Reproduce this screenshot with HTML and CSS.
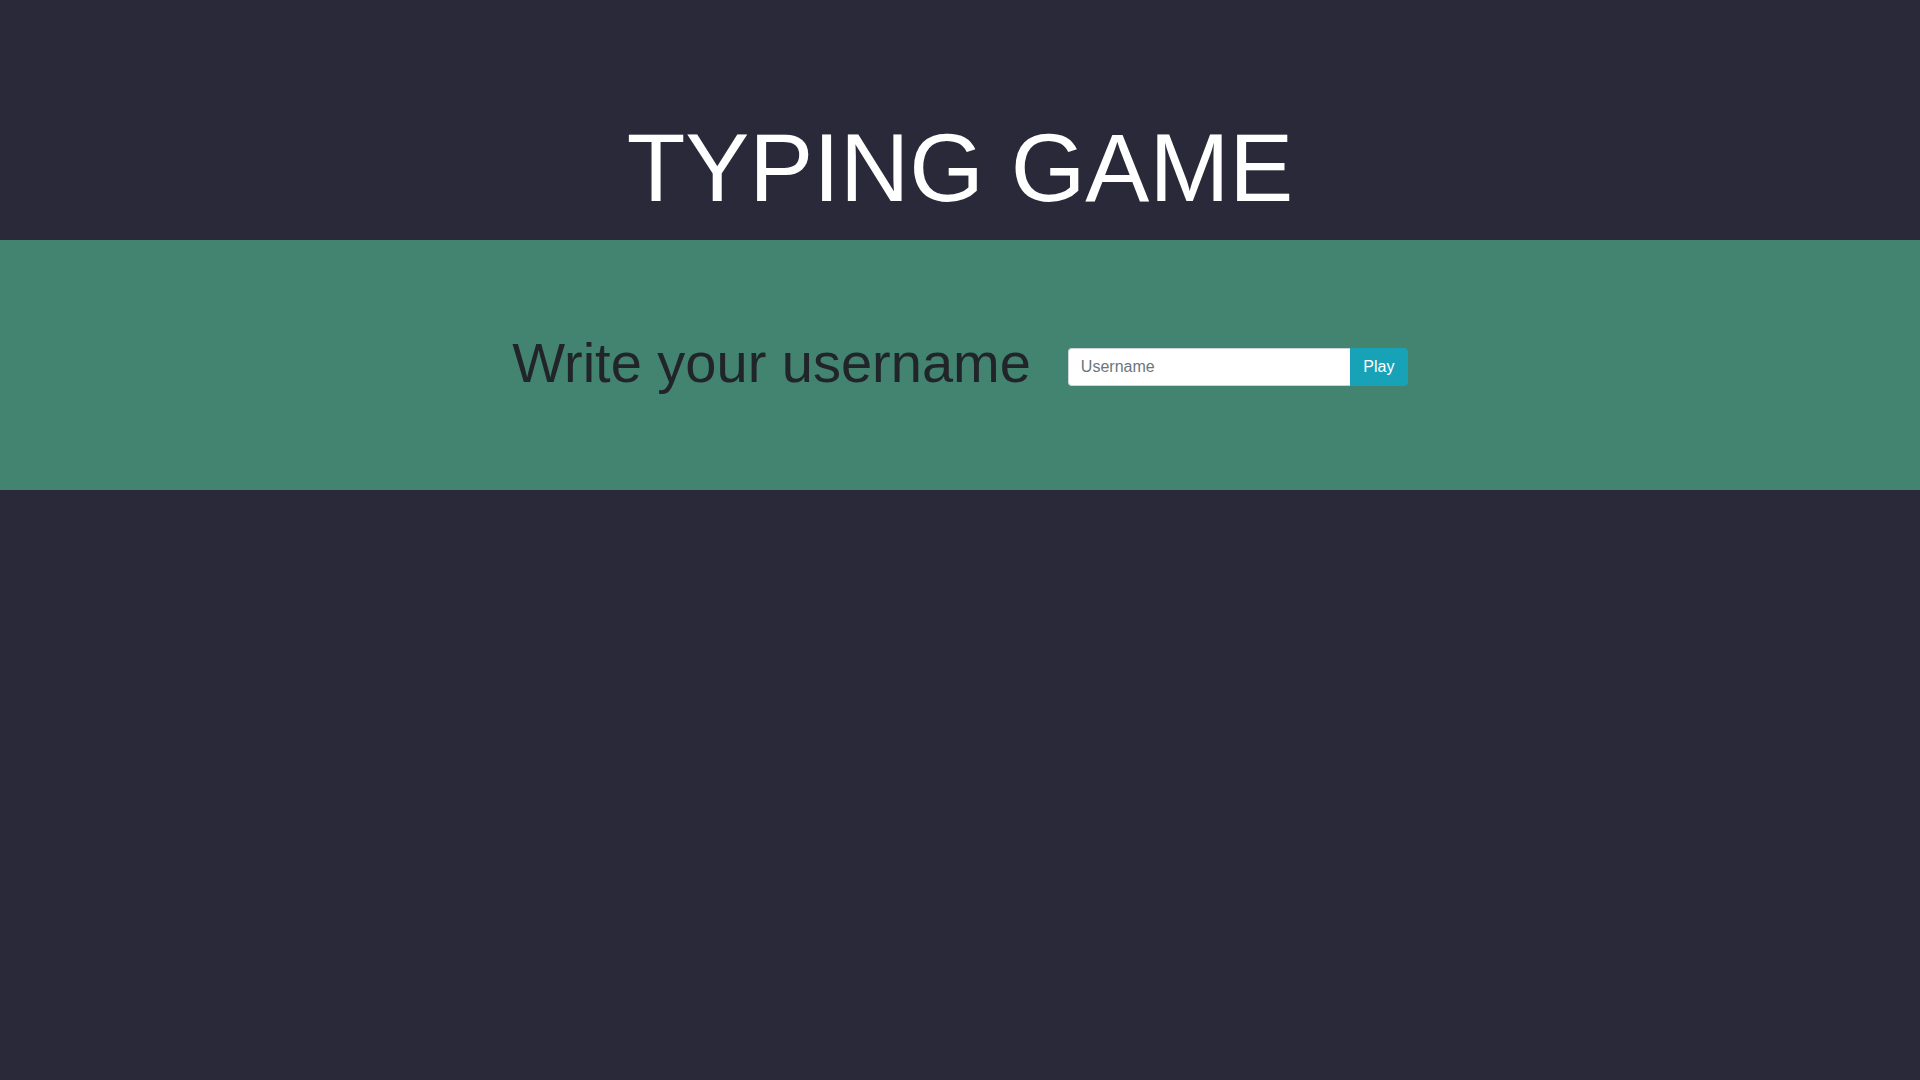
FILE: index.html
```html
<!DOCTYPE html>
<html lang="en">
<head>
<meta charset="utf-8">
<title>Typing Game</title>
<link rel="stylesheet" href="styles.css">
</head>
<body>
<header class="header">
  <h1 class="title">TYPING GAME</h1>
</header>
<section class="band">
  <div class="row">
    <h2 class="prompt">Write your username</h2>
    <div class="input-group">
      <input class="field" type="text" placeholder="Username">
      <button class="btn" type="button">Play</button>
    </div>
  </div>
</section>
</body>
</html>
```
FILE: styles.css
```css
html, body {
  margin: 0;
  padding: 0;
  background: #2a293a;
  font-family: "Liberation Sans", Arial, sans-serif;
  min-height: 100%;
}
body {
  min-height: 1080px;
}
.header {
  height: 240px;
  box-sizing: border-box;
  padding-top: 110px;
  text-align: center;
}
.title {
  margin: 0;
  font-size: 96px;
  font-weight: 300;
  line-height: 1.2;
  color: #ffffff;
}
.band {
  height: 250px;
  background: #438471;
  display: flex;
  align-items: center;
  justify-content: center;
}
.row {
  display: flex;
  align-items: center;
  gap: 37px;
  margin-top: 4px;
}
.prompt {
  margin: 0 0 8px 0;
  font-size: 56px;
  font-weight: 300;
  line-height: 1.2;
  color: #212529;
}
.input-group {
  display: flex;
  width: 340px;
  height: 38px;
}
.field {
  flex: 1;
  min-width: 0;
  box-sizing: border-box;
  height: 38px;
  padding: 6px 12px;
  font-family: "Liberation Sans", Arial, sans-serif;
  font-size: 16px;
  color: #495057;
  background: #fff;
  border: 1px solid #ced4da;
  border-right: none;
  border-radius: 4px 0 0 4px;
  outline: none;
}
.field::placeholder {
  color: #6c757d;
}
.btn {
  box-sizing: border-box;
  width: 58px;
  height: 38px;
  padding: 6px 12px;
  font-family: "Liberation Sans", Arial, sans-serif;
  font-size: 16px;
  color: #fff;
  background: #17a2b8;
  border: 1px solid #17a2b8;
  border-radius: 0 4px 4px 0;
}
```
